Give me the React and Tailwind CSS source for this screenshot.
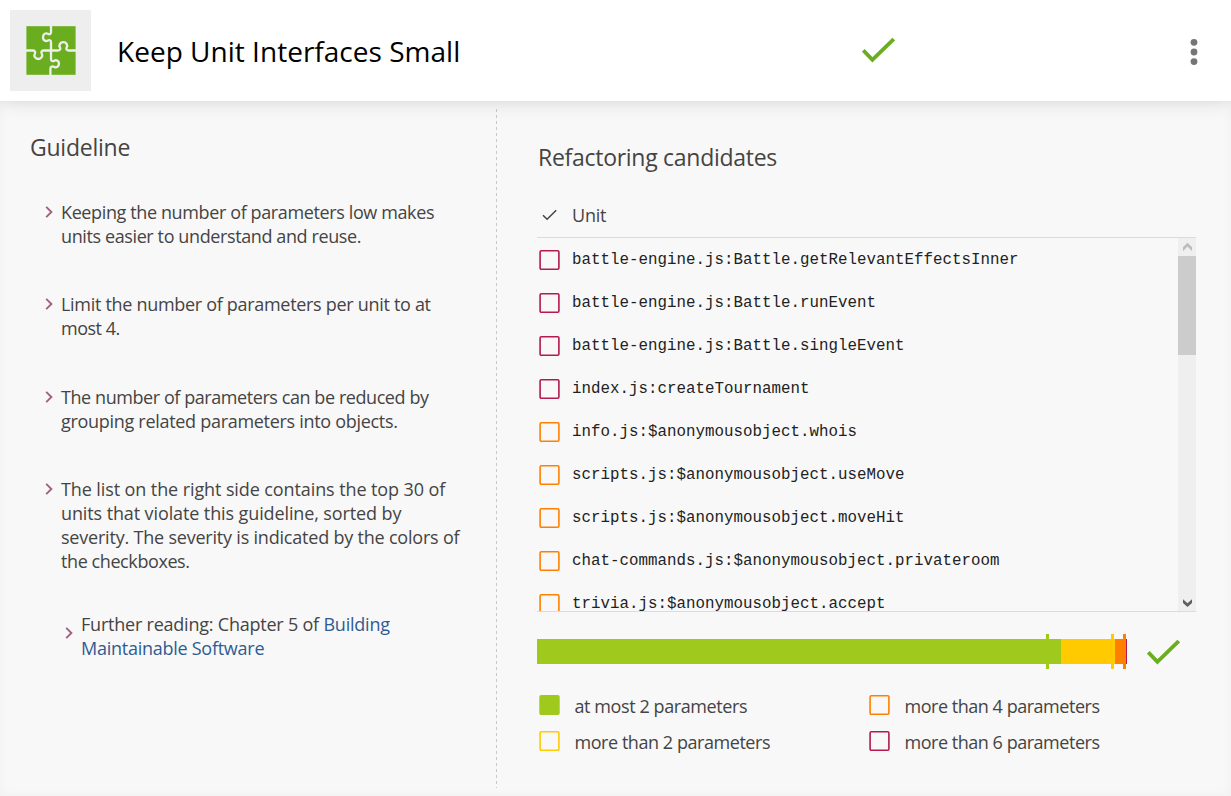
const guidelines = [
  {
    box: "",
    lines: [
      ["Keeping the number of parameters low makes", "tracking-[-0.38px]"],
      ["units easier to understand and reuse.", "tracking-[-0.389px]"],
    ],
  },
  {
    box: "mt-11",
    lines: [
      ["Limit the number of parameters per unit to at", "tracking-[-0.305px]"],
      ["most 4.", "tracking-[-0.5px]"],
    ],
  },
  {
    box: "mt-[45px]",
    lines: [
      ["The number of parameters can be reduced by", "tracking-[-0.429px]"],
      ["grouping related parameters into objects.", "tracking-[-0.297px]"],
    ],
  },
  {
    box: "mt-11",
    lines: [
      ["The list on the right side contains the top 30 of", "tracking-[-0.1px]"],
      ["units that violate this guideline, sorted by", "tracking-[-0.111px]"],
      ["severity. The severity is indicated by the colors of", "tracking-[-0.205px]"],
      ["the checkboxes.", "tracking-[-0.412px]"],
    ],
  },
];

const units = [
  ["battle-engine.js:Battle.getRelevantEffectsInner", "#b5194e"],
  ["battle-engine.js:Battle.runEvent", "#b5194e"],
  ["battle-engine.js:Battle.singleEvent", "#b5194e"],
  ["index.js:createTournament", "#b5194e"],
  ["info.js:$anonymousobject.whois", "#ff8000"],
  ["scripts.js:$anonymousobject.useMove", "#ff8000"],
  ["scripts.js:$anonymousobject.moveHit", "#ff8000"],
  ["chat-commands.js:$anonymousobject.privateroom", "#ff8000"],
  ["trivia.js:$anonymousobject.accept", "#ff8000"],
];

const legend = [
  ["at most 2 parameters", "#9fc91c", true, "tracking-[-0.412px]"],
  ["more than 4 parameters", "#ff8000", false, "tracking-[-0.47px]"],
  ["more than 2 parameters", "#ffca00", false, "tracking-[-0.446px]"],
  ["more than 6 parameters", "#b5194e", false, "tracking-[-0.47px]"],
];

function Box({ color, filled }) {
  return (
    <svg className="block shrink-0" width="21" height="20" viewBox="0 0 21 20">
      <rect x="1.1" y="0.8" width="18.8" height="18.4" rx="1.2" fill={filled ? color : "none"} stroke={color} strokeWidth="1.6" />
    </svg>
  );
}

function Arrow() {
  return (
    <svg className="block" width="8" height="12" viewBox="0 0 8 12">
      <path d="M1.2 0.9 6.4 6 1.2 11.1" fill="none" stroke="#a1607f" strokeWidth="1.9" />
    </svg>
  );
}

function Check() {
  return (
    <svg className="block" width="33" height="26" viewBox="0 0 33 26">
      <path d="M1.3 13.3 10.4 22.8 31.7 2" fill="none" stroke="#6aae20" strokeWidth="3.8" />
    </svg>
  );
}

function Puzzle() {
  return (
    <svg className="block" width="50" height="49" viewBox="0 0 50 49">
      <rect x="0.4" y="0.2" width="49.2" height="48.6" fill="#6aae20" />
      <g fill="none" stroke="#eeeeee" strokeWidth="2.3">
        <path d="M25 0V6.2C25 8.6 23.2 8.6 21.8 7.8C19.5 6.6 17 8.2 17 11.2C17 14.2 19.5 15.8 21.8 14.6C23.2 13.8 25 13.9 25 16.2V33C25 35.3 26.8 35.6 28.2 34.7C30.5 33.4 33 35 33 37.6C33 40.6 30.5 42 28.2 40.9C26.8 40.1 24.4 40.3 24.4 42.6V49" />
        <path d="M0 24.5H7C9.3 24.5 9.6 26.3 8.8 27.7C7.6 30 9.2 33 12.3 33C15.4 33 17 30 15.8 27.7C15 26.3 15.2 24.5 17.5 24.5H32C34.6 24.5 34.6 22.7 33.9 21.4C32.7 19 34.2 16.2 37.3 16.2C40.4 16.2 41.9 19 40.7 21.4C40 22.7 40.1 24.5 42.5 24.5H50" />
      </g>
    </svg>
  );
}

export default function App() {
  return (
    <div className="flex h-[796px] w-full flex-col overflow-hidden bg-[#f8f8f8] font-['Open_Sans',sans-serif] text-lg leading-6 text-[#444444]">
      <header className="z-10 flex h-[101px] shrink-0 items-start bg-white shadow-[0_0_20px_rgba(0,0,0,0.13)]">
        <div className="ml-2.5 mt-2.5 flex h-[81px] w-[81px] items-start bg-[#eeeeee] pl-4 pt-4">
          <Puzzle />
        </div>
        <h1 className="ml-[26px] mt-[31px] w-[745px] whitespace-nowrap text-[28px] leading-10 tracking-[0.02px] text-black">
          Keep Unit Interfaces Small
        </h1>
        <div className="mt-[37px]">
          <Check />
        </div>
        <svg className="ml-auto mr-[33px] mt-[38px] block" width="8" height="28" viewBox="0 0 8 28">
          <g fill="#757575">
            <circle cx="4" cy="4.3" r="3.4" />
            <circle cx="4" cy="14" r="3.4" />
            <circle cx="4" cy="23.6" r="3.4" />
          </g>
        </svg>
      </header>

      <main className="flex grow shadow-[inset_0_0_12px_rgba(0,0,0,0.035)]">
        <section className="mb-2 mt-2.5 w-[496px] pl-[30px] pt-5">
          <h2 className="text-[23px] leading-8 tracking-[-0.23px]">Guideline</h2>
          <ul className="mt-[37px]">
            {guidelines.map((g) => (
              <li key={g.lines[0][0]} className={`flex pl-[15px] ${g.box}`}>
                <div className="mt-[6px] w-4 shrink-0">
                  <Arrow />
                </div>
                <p className="whitespace-nowrap">
                  {g.lines.map(([text, tracking]) => (
                    <span key={text} className={`block ${tracking}`}>{text}</span>
                  ))}
                </p>
              </li>
            ))}
            <li className="mt-[39px] flex pl-[35px]">
              <div className="mt-[15px] w-4 shrink-0">
                <Arrow />
              </div>
              <p className="whitespace-nowrap">
                <span className="block tracking-[-0.22px]">
                  Further reading: Chapter 5 of <a className="text-[#2f5b93]">Building</a>
                </span>
                <a className="block tracking-[-0.26px] text-[#2f5b93]">Maintainable Software</a>
              </p>
            </li>
          </ul>
        </section>
        <div className="mb-2 mt-2 w-px bg-[repeating-linear-gradient(to_bottom,#c8c8c8_0px,#c8c8c8_3px,transparent_3px,transparent_6px)]" />

        <section className="ml-10 w-[659px] pt-10">
          <h2 className="pl-px text-[23px] leading-8 tracking-[-0.28px]">Refactoring candidates</h2>
          <div className="mt-[30px] flex h-[35px] border-b border-[#dcdcdc]">
            <svg className="ml-[5px] mt-[6px] block" width="15" height="12" viewBox="0 0 15 12">
              <path d="M1 6.2 5.1 10.3 14.2 1.2" fill="none" stroke="#444444" strokeWidth="1.5" />
            </svg>
            <span className="ml-[15px] tracking-[-0.2px]">Unit</span>
          </div>
          <div className="flex h-[374px] border-b border-[#dcdcdc]">
            <ul className="grow overflow-hidden pl-0.5">
              {units.map(([name, color]) => (
                <li key={name} className="flex h-[43px] gap-3 pt-3">
                  <Box color={color} />
                  <span className="-mt-px whitespace-nowrap font-['Liberation_Mono',monospace] text-[15.8px] leading-[22px] tracking-[0.02px] text-[#222222]">{name}</span>
                </li>
              ))}
            </ul>
            <div className="flex w-[18px] shrink-0 flex-col bg-[#efefef]">
              <svg className="block" width="18" height="18" viewBox="0 0 18 18">
                <path d="M5 9.3 9.5 4.8 14 9.3V13L9.5 8.5 5 13Z" fill="#bcbcbc" />
              </svg>
              <div className="h-[99px] bg-[#cccccc]" />
              <svg className="mt-auto block" width="18" height="18" viewBox="0 0 18 18">
                <path d="M5 6.2 9.5 10.2 14 6.2V9.9L9.5 14 5 9.9Z" fill="#5f5f5f" />
              </svg>
            </div>
          </div>

          <div className="mt-[22px] flex">
            <div className="relative flex h-[35px] w-[590px] py-[5px]">
              <div className="w-[524px] bg-[#9fc91c]" />
              <div className="w-[54px] bg-[#ffca00]" />
              <div className="w-[11px] bg-[#ff8000]" />
              <div className="w-px bg-[#b5194e]" />
              <i className="absolute left-[509px] top-0 h-[35px] w-[3px] bg-[#9fc91c]" />
              <i className="absolute left-[574px] top-0 h-[35px] w-[3px] bg-[#ffca00]" />
              <i className="absolute left-[586px] top-0 h-[35px] w-[3px] bg-[#ff8000]" />
            </div>
            <div className="ml-5 mt-[5px]">
              <Check />
            </div>
          </div>

          <ul className="mt-[25px] grid grid-cols-[330px_1fr] pl-0.5">
            {legend.map(([text, color, filled, tracking]) => (
              <li key={text} className="flex h-9 gap-[14.5px]">
                <div className="mt-px">
                  <Box color={color} filled={filled} />
                </div>
                <span className={`whitespace-nowrap ${tracking}`}>{text}</span>
              </li>
            ))}
          </ul>
        </section>
      </main>
    </div>
  );
}
